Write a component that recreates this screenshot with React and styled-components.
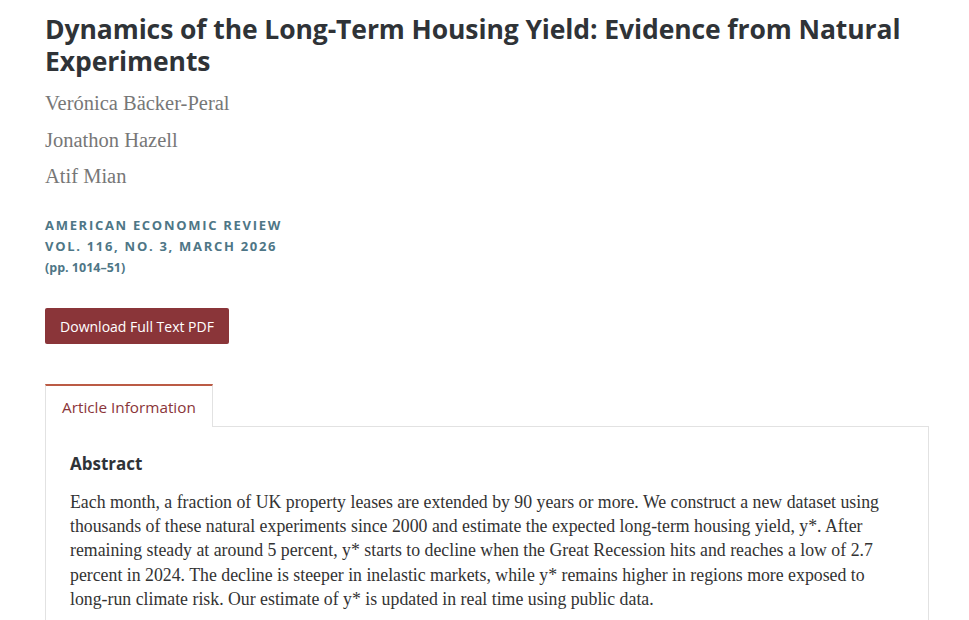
import React from "react";
import styled, { createGlobalStyle } from "styled-components";

const Global = createGlobalStyle`
  html, body { margin: 0; padding: 0; background: #fff; }
  body { font-family: "Open Sans", "Noto Sans", sans-serif; }
`;

const Page = styled.main`
  padding: 13px 41px 0 45px;
`;

const Title = styled.h1`
  margin: 0;
  font-family: "Open Sans", sans-serif;
  font-weight: 700;
  font-size: 26.5px;
  line-height: 32px;
  color: #2f3337;
  letter-spacing: -0.1px;
`;

const Authors = styled.ul`
  list-style: none;
  margin: 13px 0 0;
  padding: 0;
  display: flex;
  flex-direction: column;
  gap: 10.5px;
`;

const Author = styled.li`
  font-family: "Liberation Serif", serif;
  font-size: 20.5px;
  line-height: 26px;
  color: #777;
`;

const Journal = styled.div`
  margin-top: 26px;
  display: flex;
  flex-direction: column;
  color: #4e7686;
  font-weight: 700;
`;

const JournalLine = styled.span`
  font-size: ${(p) => (p.$small ? "12.5px" : "13px")};
  letter-spacing: ${(p) => (p.$small ? "0" : "1.7px")};
  line-height: 21px;
  text-transform: ${(p) => (p.$small ? "none" : "uppercase")};
`;

const Button = styled.button`
  margin-top: 30px;
  display: inline-flex;
  align-items: center;
  justify-content: center;
  width: 184px;
  height: 36px;
  background: #8a3539;
  color: #fff;
  border: none;
  border-radius: 2px;
  font-family: "Open Sans", sans-serif;
  font-size: 14px;
  cursor: pointer;
`;

const Tabs = styled.div`
  margin-top: 40px;
  display: flex;
`;

const Tab = styled.div`
  width: 168px;
  height: 43px;
  box-sizing: border-box;
  border-top: 2px solid #bb5b45;
  border-left: 1px solid #e2e2e2;
  border-right: 1px solid #e2e2e2;
  display: flex;
  align-items: center;
  padding-left: 16px;
  font-size: 15.3px;
  color: #8a3539;
  background: #fff;
  position: relative;
  z-index: 1;
  margin-bottom: -1px;
`;

const Panel = styled.section`
  border: 1px solid #e2e2e2;
  padding: 25px 24px 20px;
  width: 884px;
  box-sizing: border-box;
`;

const Heading = styled.h2`
  margin: 0;
  font-size: 17px;
  font-weight: 700;
  color: #2f3337;
  line-height: 24px;
`;

const Abstract = styled.p`
  margin: 14px 0 0;
  font-family: "Liberation Serif", serif;
  font-size: 17.8px;
  line-height: 24.2px;
  color: #333;
`;

export default function App() {
  return (
    <>
      <Global />
      <Page>
        <Title>
          Dynamics of the Long-Term Housing Yield: Evidence from Natural Experiments
        </Title>
        <Authors>
          <Author>Verónica Bäcker-Peral</Author>
          <Author>Jonathon Hazell</Author>
          <Author>Atif Mian</Author>
        </Authors>
        <Journal>
          <JournalLine>American Economic Review</JournalLine>
          <JournalLine>Vol. 116, No. 3, March 2026</JournalLine>
          <JournalLine $small>(pp. 1014–51)</JournalLine>
        </Journal>
        <Button>Download Full Text PDF</Button>
        <Tabs>
          <Tab>Article Information</Tab>
        </Tabs>
        <Panel>
          <Heading>Abstract</Heading>
          <Abstract>
            Each month, a fraction of UK property leases are extended by 90 years or more. We
            construct a new dataset using thousands of these natural experiments since 2000 and
            estimate the expected long-term housing yield, y*. After remaining steady at around 5
            percent, y* starts to decline when the Great Recession hits and reaches a low of 2.7
            percent in 2024. The decline is steeper in inelastic markets, while y* remains higher in
            regions more exposed to long-run climate risk. Our estimate of y* is updated in real time
            using public data.
          </Abstract>
        </Panel>
      </Page>
    </>
  );
}
